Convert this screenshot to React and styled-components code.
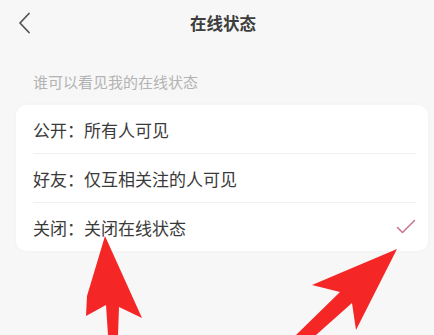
import React from 'react'
import styled, { createGlobalStyle } from 'styled-components'

const GlobalStyle = createGlobalStyle`
  html, body {
    margin: 0;
    padding: 0;
    background: #f7f7f7;
  }
  body {
    font-family: "Noto Sans CJK SC", "Noto Sans", sans-serif;
  }
`

const Page = styled.div`
  position: relative;
  width: 434px;
  height: 335px;
  overflow: hidden;
  background: #f7f7f7;
`

const NavBar = styled.div`
  height: 46px;
  display: flex;
  align-items: center;
  justify-content: center;
  padding-left: 12px;
  position: relative;
`

const BackButton = styled.button`
  position: absolute;
  left: 14px;
  top: 11px;
  width: 20px;
  height: 24px;
  padding: 0;
  border: none;
  background: none;
  display: flex;
  align-items: center;
  justify-content: center;
`

const Title = styled.h1`
  margin: 0;
  font-size: 16.5px;
  font-weight: 700;
  color: #3d3d3d;
`

const SectionLabel = styled.div`
  padding: 26px 0 0 33px;
  font-size: 15px;
  line-height: 20px;
  color: #b3b3b3;
`

const Card = styled.div`
  margin: 13px 6px 0 16px;
  background: #fff;
  border-radius: 10px;
  padding: 0 12px 0 17px;
  box-shadow: 0 0 4px rgba(0, 0, 0, 0.03);
`

const Row = styled.div`
  height: 48px;
  display: flex;
  align-items: center;
  justify-content: space-between;
  border-top: ${(p) => (p.$first ? 'none' : '1px solid #f0f0f0')};
`

const RowText = styled.span`
  font-size: 17px;
  color: #3a3a3a;
`

const Overlay = styled.svg`
  position: absolute;
  left: 0;
  top: 0;
  pointer-events: none;
`

const options = [
  { label: '公开：所有人可见' },
  { label: '好友：仅互相关注的人可见' },
  { label: '关闭：关闭在线状态', selected: true },
]

function Check() {
  return (
    <svg width="20" height="16" viewBox="0 0 20 16">
      <path d="M1.5 8.5 L6.5 13.5 L18.5 1.5" fill="none" stroke="#c9738f" strokeWidth="1.5" strokeLinecap="round" strokeLinejoin="round" />
    </svg>
  )
}

function App() {
  return (
    <Page>
      <GlobalStyle />
      <NavBar>
        <BackButton>
          <svg width="14" height="22" viewBox="0 0 14 22">
            <path d="M12 1.5 L3 11 L12 20.5" fill="none" stroke="#555" strokeWidth="1.8" strokeLinecap="round" strokeLinejoin="round" />
          </svg>
        </BackButton>
        <Title>在线状态</Title>
      </NavBar>
      <SectionLabel>谁可以看见我的在线状态</SectionLabel>
      <Card>
        {options.map((o, i) => (
          <Row key={o.label} $first={i === 0}>
            <RowText>{o.label}</RowText>
            {o.selected && <Check />}
          </Row>
        ))}
      </Card>
      <Overlay width="434" height="335" viewBox="0 0 434 335">
        <polygon points="105,236 87,296 86,316 106,305 108,335 118,335 119,307 142,318" fill="#f42626" />
        <polygon points="397,249 312,285 340,292 296,335 316,335 352,303 356,330" fill="#f42626" />
      </Overlay>
    </Page>
  )
}

export default App
